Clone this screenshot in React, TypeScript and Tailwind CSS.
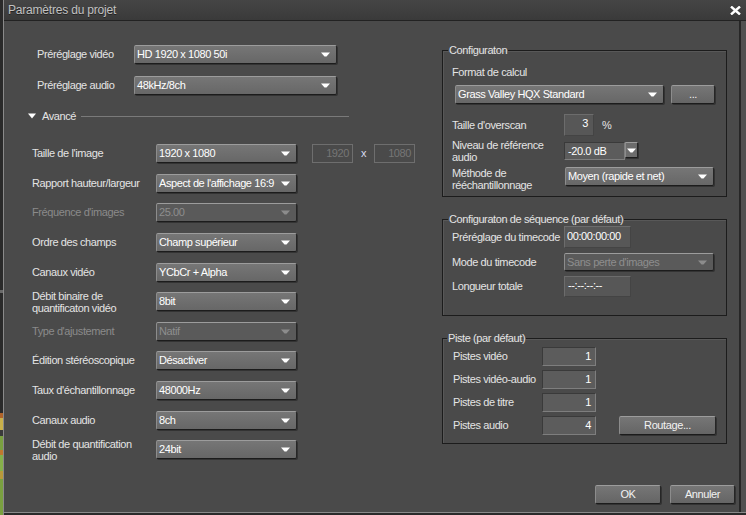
import React from "react";

const LBL = "text-[#e4e4e4]";
const DIS = "text-[#8a8a8a]";

function Arrow({ disabled }: { disabled?: boolean }) {
  return (
    <svg width="9" height="5" viewBox="0 0 9 5" className="shrink-0">
      <path d="M0 0.5h9L5.5 4.5h-2z" fill={disabled ? "#8c8c8c" : "#ffffff"} />
    </svg>
  );
}

function Select({
  value,
  className,
  disabled,
}: {
  value: string;
  className: string;
  disabled?: boolean;
}) {
  return (
    <div
      className={`flex shrink-0 items-center justify-between rounded-[2px] border border-t-[#9c9c9c] border-l-[#8c8c8c] border-r-[#262626] border-b-[#1c1c1c] pl-[2px] pr-[6px] shadow-[1px_1px_0_#333] ${
        disabled ? "bg-[#5a5a5a] text-[#8e8e8e]" : "bg-gradient-to-b from-[#767676] to-[#676767] text-white"
      } ${className}`}
    >
      <span className="whitespace-nowrap leading-none">{value}</span>
      <Arrow disabled={disabled} />
    </div>
  );
}

function Btn({ label, className }: { label: string; className: string }) {
  return (
    <div
      className={`flex shrink-0 items-center justify-center rounded-[2px] border border-t-[#9c9c9c] border-l-[#8c8c8c] border-r-[#262626] border-b-[#1c1c1c] bg-gradient-to-b from-[#767676] to-[#656565] text-[#f2f2f2] shadow-[1px_1px_0_#333] ${className}`}
    >
      <span className="leading-none">{label}</span>
    </div>
  );
}

function Field({
  value,
  className,
  align = "right",
}: {
  value: string;
  className: string;
  align?: "left" | "right";
}) {
  return (
    <div
      className={`flex shrink-0 items-center border border-t-[#3a3a3a] border-l-[#3a3a3a] border-r-[#7e7e7e] border-b-[#7e7e7e] bg-[#5c5c5c] text-white ${
        align === "right" ? "justify-end pr-[4px]" : "justify-start pl-[3px]"
      } ${className}`}
    >
      <span className="whitespace-nowrap leading-none">{value}</span>
    </div>
  );
}

function Row({
  label,
  children,
  disabled,
  two,
}: {
  label: React.ReactNode;
  children: React.ReactNode;
  disabled?: boolean;
  two?: boolean;
}) {
  return (
    <div className="flex h-[29.6px] items-center">
      <span className={`w-[124px] shrink-0 ${two ? "leading-[12px]" : "leading-none"} ${disabled ? DIS : LBL}`}>
        {label}
      </span>
      {children}
    </div>
  );
}

export default function App() {
  return (
    <div className="flex h-[515px] w-[746px] overflow-hidden bg-[#1e1e1e] font-['Liberation_Sans',Arial,sans-serif] text-[11px] tracking-[-0.4px]">
      {/* window behind */}
      <div className="flex w-[3px] shrink-0 flex-col bg-[#2a2a2a]">
        <div className="h-[290px]" />
        <div className="h-[3px] bg-[#6a6a6a]" />
        <div className="h-[120px]" />
        <div className="h-[5px] bg-[#b0642a]" />
        <div className="h-[12px] bg-[#c8b04a]" />
        <div className="h-[6px] bg-[#3a3a3a]" />
        <div className="h-[14px] bg-[#7aa040]" />
        <div className="h-[5px] bg-[#c0782e]" />
        <div className="h-[16px] bg-[#86b04a]" />
        <div className="h-[8px] bg-[#b89a3a]" />
        <div className="flex-1 bg-[#7aa040]" />
      </div>

      {/* dialog */}
      <div className="flex flex-1 flex-col border-l border-[#8a8a8a] bg-[#4a4a4a]">
        {/* title bar */}
        <div className="flex h-[21px] shrink-0 items-center justify-between border-b border-[#222] bg-gradient-to-b from-[#454545] to-[#3a3a3a] pl-[4px] pr-[5px]">
          <span className="text-[12px] tracking-[-0.2px] text-[#c2c2c2] [text-shadow:0_1px_0_#222]">
            Paramètres du projet
          </span>
          <svg width="11" height="9" viewBox="0 0 11 9">
            <path d="M1 0.5L10 8.5M10 0.5L1 8.5" stroke="#ffffff" strokeWidth="2.4" />
          </svg>
        </div>

        <div className="flex flex-1">
          {/* content */}
          <div className="flex flex-1 flex-col">
            <div className="flex items-start">
              {/* left column */}
              <div className="flex w-[438px] shrink-0 flex-col pt-[24px]">
                <div className="flex h-[19px] items-center pl-[33px]">
                  <span className={`w-[97px] shrink-0 leading-none ${LBL}`}>Préréglage vidéo</span>
                  <Select value="HD 1920 x 1080 50i" className="h-[19px] w-[203px]" />
                </div>
                <div className="mt-[12px] flex h-[19px] items-center pl-[33px]">
                  <span className={`w-[97px] shrink-0 leading-none ${LBL}`}>Préréglage audio</span>
                  <Select value="48kHz/8ch" className="h-[19px] w-[203px]" />
                </div>

                <div className="mt-[15px] flex h-[12px] items-center pl-[24px] pr-[93px]">
                  <svg width="8" height="6" viewBox="0 0 8 6" className="shrink-0">
                    <path d="M0 0.5h8L4 5.5z" fill="#ffffff" />
                  </svg>
                  <span className={`ml-[6px] leading-none ${LBL}`}>Avancé</span>
                  <div className="ml-[5px] h-px flex-1 bg-[#7a7a7a]" />
                </div>

                <div className="mt-[17px] flex flex-col pl-[28px]">
                  <Row label="Taille de l'image">
                    <Select value="1920 x 1080" className="h-[19px] w-[141px]" />
                    <div className="ml-[15px] flex h-[19px] w-[41px] shrink-0 items-center justify-end border border-[#6e6e6e] pr-[3px] text-[#767676]">
                      <span className="leading-none">1920</span>
                    </div>
                    <span className="w-[21px] text-center leading-none text-[#d8dcf0]">x</span>
                    <div className="flex h-[19px] w-[41px] shrink-0 items-center justify-end border border-[#6e6e6e] pr-[3px] text-[#767676]">
                      <span className="leading-none">1080</span>
                    </div>
                  </Row>
                  <Row label="Rapport hauteur/largeur">
                    <Select value="Aspect de l'affichage 16:9" className="h-[19px] w-[141px]" />
                  </Row>
                  <Row label="Fréquence d'images" disabled>
                    <Select value="25.00" className="h-[19px] w-[141px]" disabled />
                  </Row>
                  <Row label="Ordre des champs">
                    <Select value="Champ supérieur" className="h-[19px] w-[141px]" />
                  </Row>
                  <Row label="Canaux vidéo">
                    <Select value="YCbCr + Alpha" className="h-[19px] w-[141px]" />
                  </Row>
                  <Row
                    two
                    label={
                      <>
                        Débit binaire de
                        <br />
                        quantificaton vidéo
                      </>
                    }
                  >
                    <Select value="8bit" className="h-[19px] w-[141px]" />
                  </Row>
                  <Row label="Type d'ajustement" disabled>
                    <Select value="Natif" className="h-[19px] w-[141px]" disabled />
                  </Row>
                  <Row label="Édition stéréoscopique">
                    <Select value="Désactiver" className="h-[19px] w-[141px]" />
                  </Row>
                  <Row label="Taux d'échantillonnage">
                    <Select value="48000Hz" className="h-[19px] w-[141px]" />
                  </Row>
                  <Row label="Canaux audio">
                    <Select value="8ch" className="h-[19px] w-[141px]" />
                  </Row>
                  <Row
                    two
                    label={
                      <>
                        Débit de quantification
                        <br />
                        audio
                      </>
                    }
                  >
                    <Select value="24bit" className="h-[19px] w-[141px]" />
                  </Row>
                </div>
              </div>

              {/* right column */}
              <div className="flex w-[285px] shrink-0 flex-col">
                <fieldset className="mt-[23px] border border-[#1c1c1c] pb-[5px] shadow-[inset_1px_1px_0_#585858]">
                  <legend className={`ml-[5px] px-[1px] leading-[13px] ${LBL}`}>Configuraton</legend>
                  <div className={`ml-[9px] mt-[9px] leading-[13px] ${LBL}`}>Format de calcul</div>
                  <div className="ml-[12px] mt-[6px] flex">
                    <Select value="Grass Valley HQX Standard" className="h-[19px] w-[209px]" />
                    <Btn label="..." className="ml-[7px] h-[19px] w-[44px] text-[#cfcfcf]" />
                  </div>
                  <div className="ml-[9px] mt-[10px] flex items-center">
                    <span className={`w-[112px] shrink-0 leading-none ${LBL}`}>Taille d'overscan</span>
                    <div className="flex h-[22px] w-[30px] shrink-0 items-start justify-end border border-t-[#6c6c6c] border-l-[#6c6c6c] border-r-[#444] border-b-[#444] bg-[#575757] pr-[5px] pt-[3px] text-white">
                      <span className="leading-none">3</span>
                    </div>
                    <span className={`ml-[8px] leading-none ${LBL}`}>%</span>
                  </div>
                  <div className="ml-[9px] mt-[3px] flex items-center">
                    <span className={`w-[112px] shrink-0 leading-[12px] ${LBL}`}>
                      Niveau de référence
                      <br />
                      audio
                    </span>
                    <div className="flex items-start">
                      <Field value="-20.0 dB" align="left" className="h-[18px] w-[61px]" />
                      <div className="flex h-[16px] w-[13px] shrink-0 items-center justify-center rounded-[1px] border border-t-[#9c9c9c] border-l-[#8c8c8c] border-r-[#262626] border-b-[#1c1c1c] bg-[#6c6c6c] shadow-[1px_1px_0_#333]">
                        <Arrow />
                      </div>
                    </div>
                  </div>
                  <div className="ml-[9px] mt-[4px] flex items-start">
                    <span className={`w-[113px] shrink-0 leading-[12px] ${LBL}`}>
                      Méthode de
                      <br />
                      rééchantillonnage
                    </span>
                    <Select value="Moyen (rapide et net)" className="h-[19px] w-[149px]" />
                  </div>
                </fieldset>

                <fieldset className="mt-[16px] border border-[#1c1c1c] pb-[18px] shadow-[inset_1px_1px_0_#585858]">
                  <legend className={`ml-[5px] px-[1px] leading-[13px] ${LBL}`}>
                    Configuraton de séquence (par défaut)
                  </legend>
                  <div className="ml-[9px] flex h-[22px] items-center">
                    <span className={`w-[112px] shrink-0 leading-none ${LBL}`}>Préréglage du timecode</span>
                    <div className="flex h-[22px] w-[67px] shrink-0 items-start border border-t-[#6c6c6c] border-l-[#6c6c6c] border-r-[#444] border-b-[#444] bg-[#575757] pl-[2px] pt-[4px] text-white">
                      <span className="leading-none">00:00:00:00</span>
                    </div>
                  </div>
                  <div className="ml-[9px] mt-[5px] flex h-[18px] items-center">
                    <span className={`w-[112px] shrink-0 leading-none ${LBL}`}>Mode du timecode</span>
                    <Select value="Sans perte d'images" className="h-[18px] w-[150px]" disabled />
                  </div>
                  <div className="ml-[9px] mt-[5px] flex h-[21px] items-center">
                    <span className={`w-[112px] shrink-0 leading-none ${LBL}`}>Longueur totale</span>
                    <div className="flex h-[21px] w-[67px] shrink-0 items-start border border-t-[#6c6c6c] border-l-[#6c6c6c] border-r-[#444] border-b-[#444] bg-[#575757] pl-[3px] pt-[3px] text-white">
                      <span className="leading-none">--:--:--:--</span>
                    </div>
                  </div>
                </fieldset>

                <fieldset className="mt-[16px] border border-[#1c1c1c] pb-[8px] shadow-[inset_1px_1px_0_#585858]">
                  <legend className={`ml-[4px] px-[1px] leading-[13px] ${LBL}`}>Piste (par défaut)</legend>
                  <div className="ml-[10px] mt-[2px] flex flex-col gap-[4px]">
                    {[
                      ["Pistes vidéo", "1"],
                      ["Pistes vidéo-audio", "1"],
                      ["Pistes de titre", "1"],
                      ["Pistes audio", "4"],
                    ].map(([l, v], i) => (
                      <div key={l} className="flex h-[19px] items-center">
                        <span className={`w-[89px] shrink-0 leading-none ${LBL}`}>{l}</span>
                        <Field value={v} className="h-[19px] w-[54px]" />
                        {i === 3 && <Btn label="Routage..." className="ml-[23px] h-[19px] w-[97px]" />}
                      </div>
                    ))}
                  </div>
                </fieldset>
              </div>
            </div>

            {/* footer */}
            <div className="mt-[20px] flex justify-end gap-[9px] pr-[4px]">
              <Btn label="OK" className="h-[19px] w-[66px]" />
              <Btn label="Annuler" className="h-[19px] w-[65px]" />
            </div>
          </div>

          {/* right frame */}
          <div className="w-[7px] shrink-0 border-l-2 border-[#262626] bg-[#505050]" />
        </div>

        {/* bottom frame */}
        <div className="h-[3px] shrink-0 border-t border-[#8a8a8a] bg-[#2a2a2a]" />
      </div>
    </div>
  );
}
